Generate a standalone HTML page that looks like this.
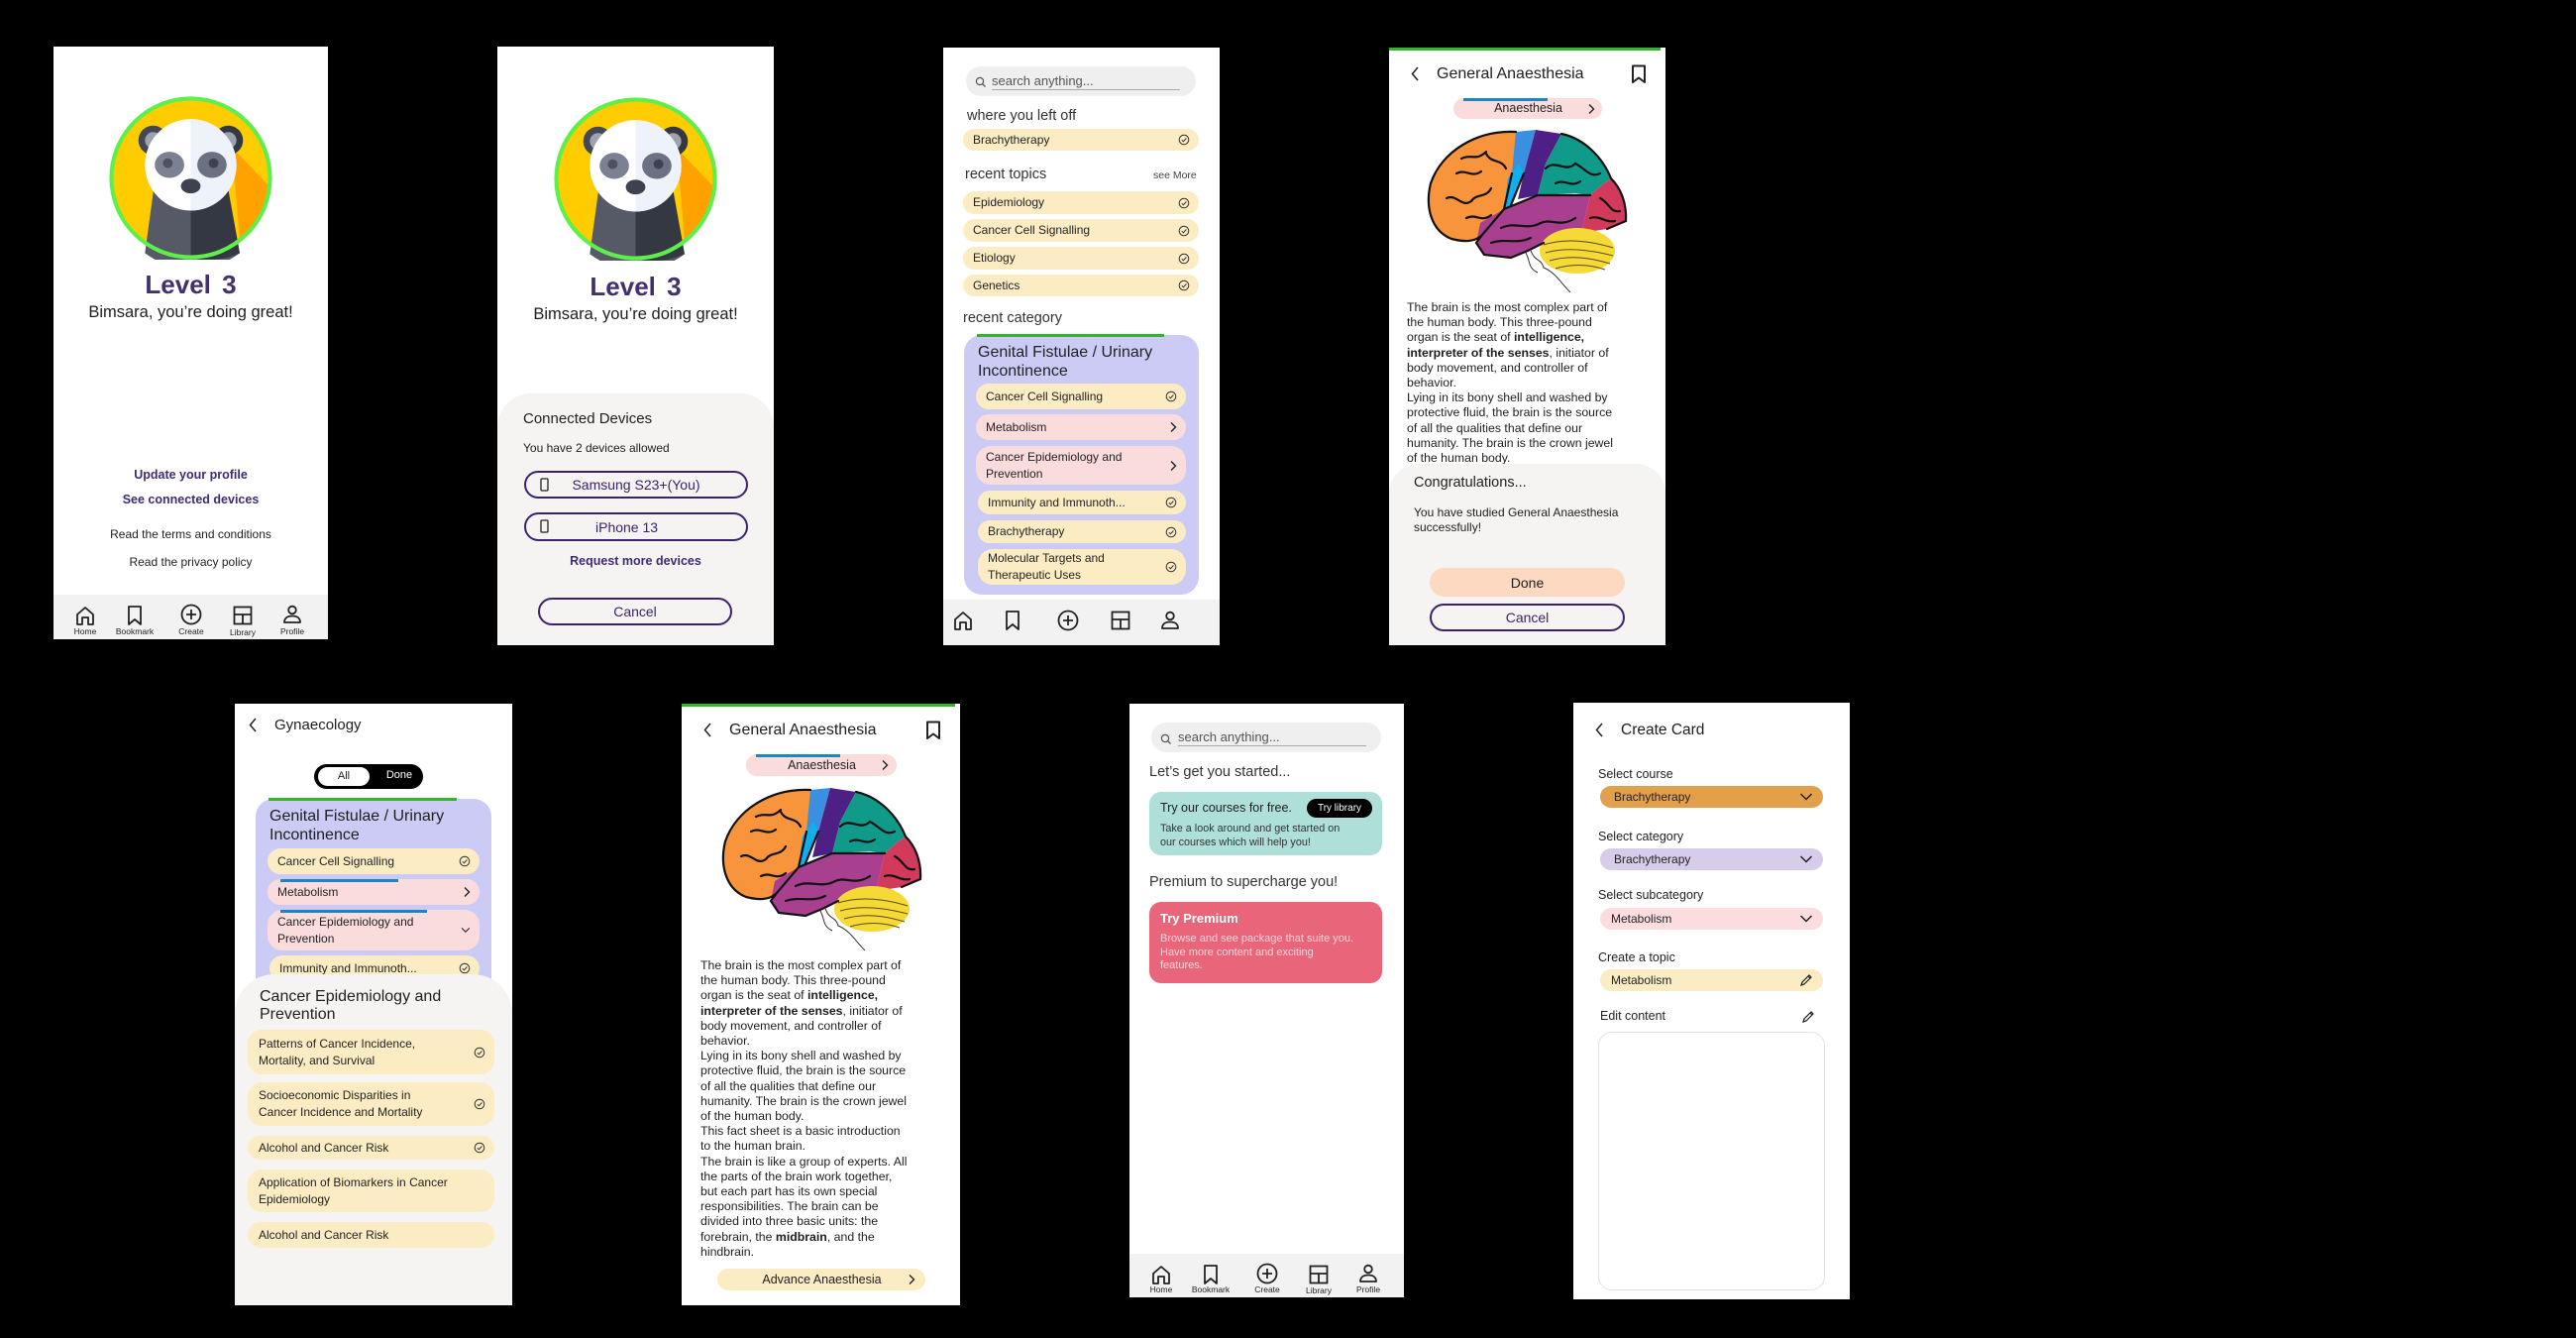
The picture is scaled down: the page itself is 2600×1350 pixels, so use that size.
<!DOCTYPE html>
<html><head><meta charset="utf-8">
<style>
*{margin:0;padding:0;box-sizing:border-box}
body{width:2600px;height:1350px;background:#000;position:relative;overflow:hidden;font-family:"Liberation Sans",sans-serif;color:#1e1e1e}
.s{position:absolute;background:#fff;overflow:hidden}
.a{position:absolute;white-space:nowrap}
.pill{position:absolute;border-radius:13px;display:flex;align-items:center;justify-content:space-between;padding:0 9px 0 10px;font-size:12px;color:#222;line-height:17px}
.y{background:#fcecc4}.p{background:#fbdcdc}
.nav{position:absolute;left:0;width:100%;height:46px;background:#f2f2f2}
.nav svg{position:absolute}
.nav span{position:absolute;font-size:8.5px;color:#222;transform:translateX(-50%)}
.sheet{position:absolute;left:0;width:100%;background:#f5f4f2;border-radius:34px 34px 0 0}
.btn{position:absolute;border:2px solid #3b2270;border-radius:15px;display:flex;align-items:center;justify-content:center;font-size:14px;color:#3b2270}
.purple{color:#3f2a78;font-weight:bold}
.art{position:absolute;font-size:12.3px;line-height:15.2px;color:#1e1e1e;white-space:nowrap}
.search{position:absolute;background:#efefef;border-radius:16px}
.lbl{position:absolute;font-size:12.5px;color:#222;white-space:nowrap}
.dd{position:absolute;left:27px;width:225px;height:22px;border-radius:11px;font-size:12px;display:flex;align-items:center;justify-content:space-between;padding:0 10px 0 14px;color:#222}
</style></head><body>

<svg width="0" height="0" style="position:absolute">
<defs>
<g id="panda">
<circle cx="50" cy="50" r="48.5" fill="#ffcc00"/>
<path d="M72 28 L98 55 A48.5 48.5 0 0 1 80 88 L76 40Z" fill="#ffa200"/>
<path d="M22 96 L28 52 H72 L80 96 A48.5 48.5 0 0 1 22 96Z" fill="#565a66"/>
<path d="M50 52 H72 L80 96 A48.5 48.5 0 0 1 50 99Z" fill="#343842"/>
<circle cx="27" cy="27" r="9" fill="#444856"/><circle cx="27" cy="27" r="5" fill="#9ea1ae"/>
<circle cx="73" cy="27" r="9" fill="#343842"/><circle cx="73" cy="27" r="5" fill="#9ea1ae"/>
<circle cx="50" cy="42" r="28" fill="#fff"/>
<path d="M50 14 A28 28 0 0 1 50 70Z" fill="#eef2fb"/>
<ellipse cx="37" cy="42" rx="9" ry="8" fill="#7c8093"/><circle cx="36" cy="41" r="3" fill="#4d5160"/>
<ellipse cx="63" cy="42" rx="9" ry="8" fill="#6c7083"/><circle cx="64" cy="41" r="3" fill="#3d4150"/>
<ellipse cx="50" cy="55" rx="6" ry="4.5" fill="#3d4150"/>
<circle cx="50" cy="50" r="48.5" fill="none" stroke="#5ef04a" stroke-width="2.5"/>
</g>
<g id="brain">
<path d="M100 8 C60 6 25 28 14 60 C8 85 15 108 35 116 C50 120 60 118 66 112 L88 86 L96 50 L110 8Z" fill="#f7943c"/>
<path d="M100 8 L120 6 L108 50 L95 82 L88 86 L96 50Z" fill="#3a8fe0"/>
<path d="M103 40 L108 50 L95 82 L88 86 L92 55Z" fill="#10aef0"/>
<path d="M120 6 L146 10 L130 40 L122 72 L102 76 L108 50Z" fill="#4e1f84"/>
<path d="M146 10 C170 15 188 35 196 55 L186 62 L175 72 L160 70 L122 72 L130 40Z" fill="#0f9a8a"/>
<path d="M196 55 C206 65 212 80 211 98 L192 106 L166 110 L175 72 L186 62Z" fill="#d13a5a"/>
<path d="M88 86 L122 72 L175 72 L166 110 L150 118 L128 120 L112 128 L95 135 L68 132 L60 120 L64 100Z" fill="#a8408f"/>
<ellipse cx="162" cy="128" rx="38" ry="23" fill="#f4d937"/>
<g fill="none" stroke="#111" stroke-width="2.2" stroke-linecap="round">
<path d="M100 8 C60 6 25 28 14 60 C8 85 15 108 35 116 C50 120 60 118 66 112 L60 120 L68 132 L95 135 L112 128 L128 120"/>
<path d="M146 10 C170 15 188 35 196 55 C206 65 212 80 211 98 L192 106"/>
<path d="M66 112 L88 86 L122 72 L175 72"/>
<path d="M96 50 L88 86 M108 50 L95 82"/>
<path d="M40 50 C50 45 55 55 65 48 M30 75 C40 70 45 85 55 78 C60 70 70 75 75 65 M50 95 C60 90 65 100 75 92 M70 30 C75 40 85 35 90 45 M45 35 C55 30 60 38 70 28"/>
<path d="M130 45 C140 35 150 50 160 40 C170 45 175 55 185 50 M140 60 C150 55 155 65 165 58"/>
<path d="M85 105 C100 98 110 108 125 100 C135 95 145 105 160 95 M75 120 C90 115 100 122 115 115"/>
<path d="M185 75 C195 80 195 90 205 88 M175 95 C185 92 190 100 200 98"/>
</g>
<g fill="none" stroke="#5a4a10" stroke-width="1">
<path d="M128 122 C150 115 175 118 198 125 M130 130 C150 124 175 127 198 133 M134 138 C155 132 175 135 195 141 M140 146 C160 140 178 143 190 147"/>
</g>
<path d="M115 128 C120 140 125 135 128 145 C140 150 145 160 155 170" fill="none" stroke="#333" stroke-width="1"/>
<path d="M110 130 C115 140 112 145 122 150" fill="none" stroke="#333" stroke-width="1"/>
</g>
<g id="chk"><circle cx="6" cy="6" r="4.8" fill="none" stroke="#333" stroke-width="1"/><path d="M3.8 6.2l1.6 1.6 3-3.3" fill="none" stroke="#333" stroke-width="1"/></g>
<g id="chr"><path d="M2 1.5l4.5 4.5-4.5 4.5" fill="none" stroke="#222" stroke-width="1.4"/></g>
<g id="home"><path d="M3 10 L11 3 L19 10 V20 H14 V13 H8 V20 H3 Z" fill="none" stroke="#222" stroke-width="1.8" stroke-linejoin="round"/></g>
<g id="bm"><path d="M5 2 H17 V20 L11 15 L5 20 Z" fill="none" stroke="#222" stroke-width="1.8" stroke-linejoin="round"/></g>
<g id="plus"><circle cx="11" cy="11" r="9.5" fill="none" stroke="#222" stroke-width="1.8"/><path d="M11 6 V16 M6 11 H16" stroke="#222" stroke-width="1.8"/></g>
<g id="lib"><rect x="2.5" y="2.5" width="17" height="17" fill="none" stroke="#222" stroke-width="1.8"/><path d="M2.5 10 H19.5 M11 10 V19.5" stroke="#222" stroke-width="1.8"/></g>
<g id="prof"><circle cx="11" cy="6.5" r="3.8" fill="none" stroke="#222" stroke-width="1.8"/><path d="M3 19 C3 14 7 12.5 11 12.5 C15 12.5 19 14 19 19 Z" fill="none" stroke="#222" stroke-width="1.8" stroke-linejoin="round"/></g>
<g id="mag"><circle cx="5" cy="5" r="3.6" fill="none" stroke="#555" stroke-width="1.2"/><path d="M7.6 7.6 L10.5 10.5" stroke="#555" stroke-width="1.3"/></g>
<g id="back"><path d="M7 1 L1.5 7.5 L7 14" fill="none" stroke="#222" stroke-width="1.5"/></g>
<g id="bmk"><path d="M2 1.5 H14 V18 L8 13.5 L2 18 Z" fill="none" stroke="#222" stroke-width="2" stroke-linejoin="round"/></g>
<g id="dn"><path d="M1.5 2 L7 7.5 L12.5 2" fill="none" stroke="#222" stroke-width="1.5"/></g>
<g id="pen"><path d="M2 12 L3 9 L10 2 L12 4 L5 11 Z M9 3 L11 5" fill="none" stroke="#222" stroke-width="1.2"/></g>
<g id="phone"><rect x="1" y="1" width="7" height="12" rx="1" fill="none" stroke="#222" stroke-width="1.3"/></g>
</defs></svg>

<!-- Screen 1 -->
<div class="s" style="left:54px;top:47px;width:277px;height:598px">
<svg class="a" style="left:56px;top:50px" width="165" height="165" viewBox="0 0 100 100"><use href="#panda"/></svg>
<div class="a" style="left:0;width:100%;text-align:center;top:224px;font-size:26px;font-weight:bold;color:#45306f;line-height:32px;word-spacing:4px">Level 3</div>
<div class="a" style="left:0;width:100%;text-align:center;top:258px;font-size:16.5px;line-height:20px">Bimsara, you’re doing great!</div>
<div class="a purple" style="left:0;width:100%;text-align:center;top:425px;font-size:12.5px">Update your profile</div>
<div class="a purple" style="left:0;width:100%;text-align:center;top:450px;font-size:12.5px">See connected devices</div>
<div class="a" style="left:0;width:100%;text-align:center;top:485px;font-size:12px">Read the terms and conditions</div>
<div class="a" style="left:0;width:100%;text-align:center;top:513px;font-size:12px">Read the privacy policy</div>
<div class="nav" style="top:553px">
<svg style="left:21px;top:10px" width="22" height="22"><use href="#home"/></svg><span style="left:32px;top:32px">Home</span>
<svg style="left:71px;top:10px" width="22" height="22"><use href="#bm"/></svg><span style="left:82px;top:32px">Bookmark</span>
<svg style="left:128px;top:9px" width="22" height="22"><use href="#plus"/></svg><span style="left:139px;top:32px">Create</span>
<svg style="left:180px;top:10px" width="22" height="22"><use href="#lib"/></svg><span style="left:191px;top:33px">Library</span>
<svg style="left:230px;top:9px" width="22" height="22"><use href="#prof"/></svg><span style="left:241px;top:32px">Profile</span>
</div>
</div>

<!-- Screen 2 -->
<div class="s" style="left:502px;top:47px;width:279px;height:604px">
<svg class="a" style="left:57px;top:51px" width="165" height="165" viewBox="0 0 100 100"><use href="#panda"/></svg>
<div class="a" style="left:0;width:100%;text-align:center;top:226px;font-size:26px;font-weight:bold;color:#45306f;line-height:32px;word-spacing:4px">Level 3</div>
<div class="a" style="left:0;width:100%;text-align:center;top:260px;font-size:16.5px;line-height:20px">Bimsara, you’re doing great!</div>
<div class="sheet" style="top:350px;height:260px">
<div class="a" style="left:26px;top:17px;font-size:15px">Connected Devices</div>
<div class="a" style="left:26px;top:48px;font-size:12px">You have 2 devices allowed</div>
<div class="btn" style="left:27px;top:78px;width:226px;height:28px">Samsung S23+(You)</div>
<svg class="a" style="left:43px;top:85px" width="10" height="15"><use href="#phone"/></svg>
<div class="btn" style="left:27px;top:120px;width:226px;height:29px;justify-content:flex-start;padding-left:70px">iPhone 13</div>
<svg class="a" style="left:43px;top:127px" width="10" height="15"><use href="#phone"/></svg>
<div class="a purple" style="left:0;width:100%;text-align:center;top:162px;font-size:12.5px">Request more devices</div>
<div class="btn" style="left:41px;top:206px;width:196px;height:28px">Cancel</div>
</div>
</div>

<!-- Screen 3 -->
<div class="s" style="left:952px;top:48px;width:279px;height:603px">
<div class="search" style="left:23px;top:19px;width:232px;height:30px"></div>
<svg class="a" style="left:32px;top:29px" width="12" height="12"><use href="#mag"/></svg>
<div class="a" style="left:49px;top:26px;font-size:13px;color:#555;border-bottom:1px solid #aaa;width:190px;padding-bottom:1px">search anything...</div>
<div class="a" style="left:24px;top:61px;font-size:14.5px;color:#333">where you left off</div>
<div class="pill y" style="left:20px;top:82px;width:238px;height:22px">Brachytherapy<svg width="12" height="12"><use href="#chk"/></svg></div>
<div class="a" style="left:22px;top:120px;font-size:14.5px;color:#333">recent topics</div>
<div class="a" style="left:212px;top:123px;font-size:10.5px;color:#444">see More</div>
<div class="pill y" style="left:20px;top:145px;width:238px;height:23px">Epidemiology<svg width="12" height="12"><use href="#chk"/></svg></div>
<div class="pill y" style="left:20px;top:173px;width:238px;height:23px">Cancer Cell Signalling<svg width="12" height="12"><use href="#chk"/></svg></div>
<div class="pill y" style="left:20px;top:201px;width:238px;height:23px">Etiology<svg width="12" height="12"><use href="#chk"/></svg></div>
<div class="pill y" style="left:20px;top:229px;width:238px;height:22px">Genetics<svg width="12" height="12"><use href="#chk"/></svg></div>
<div class="a" style="left:20px;top:265px;font-size:14.5px;color:#333">recent category</div>
<div class="a" style="left:21px;top:290px;width:237px;height:262px;background:#cccbf5;border-radius:18px"></div>
<div class="a" style="left:34px;top:289px;width:189px;height:3px;background:#32b52a"></div>
<div class="a" style="left:35px;top:298px;font-size:16px;line-height:19px;color:#222">Genital Fistulae / Urinary<br>Incontinence</div>
<div class="pill y" style="left:33px;top:339px;width:212px;height:26px">Cancer Cell Signalling<svg width="12" height="12"><use href="#chk"/></svg></div>
<div class="pill p" style="left:33px;top:370px;width:212px;height:26px">Metabolism<svg width="8" height="12"><use href="#chr"/></svg></div>
<div class="pill p" style="left:33px;top:402px;width:212px;height:39px;border-radius:15px">Cancer Epidemiology and<br>Prevention<svg width="8" height="12"><use href="#chr"/></svg></div>
<div class="pill y" style="left:35px;top:447px;width:210px;height:24px">Immunity and Immunoth...<svg width="12" height="12"><use href="#chk"/></svg></div>
<div class="pill y" style="left:35px;top:477px;width:210px;height:23px">Brachytherapy<svg width="12" height="12"><use href="#chk"/></svg></div>
<div class="pill y" style="left:35px;top:506px;width:210px;height:36px;border-radius:15px">Molecular Targets and<br>Therapeutic Uses<svg width="12" height="12"><use href="#chk"/></svg></div>
<div class="nav" style="top:557px">
<svg style="left:9px;top:10px" width="22" height="22" viewBox="0 0 22 22"><use href="#home"/></svg>
<svg style="left:59px;top:10px" width="22" height="22"><use href="#bm"/></svg>
<svg style="left:115px;top:10px" width="22" height="22"><use href="#plus"/></svg>
<svg style="left:168px;top:10px" width="22" height="22"><use href="#lib"/></svg>
<svg style="left:218px;top:10px" width="22" height="22"><use href="#prof"/></svg>
</div>
</div>

<!-- Screen 4 -->
<div class="s" style="left:1402px;top:48px;width:279px;height:603px">
<div class="a" style="left:0;top:0;width:274px;height:3px;background:#32b52a"></div>
<svg class="a" style="left:22px;top:19px" width="9" height="16"><use href="#back"/></svg>
<div class="a" style="left:48px;top:18px;font-size:16px">General Anaesthesia</div>
<svg class="a" style="left:244px;top:17px" width="16" height="20"><use href="#bmk"/></svg>
<div class="pill p" style="left:65px;top:51px;width:150px;height:21px;justify-content:center;font-size:12.5px">Anaesthesia</div>
<svg class="a" style="left:200px;top:56px" width="8" height="12"><use href="#chr"/></svg>
<div class="a" style="left:75px;top:51px;width:85px;height:3px;background:#1a86c4"></div>
<svg class="a" style="left:28px;top:77px" width="220" height="180" viewBox="0 0 220 180"><use href="#brain"/></svg>
<div class="art" style="left:18px;top:255px">The brain is the most complex part of<br>the human body. This three-pound<br>organ is the seat of <b>intelligence,</b><br><b>interpreter of the senses</b>, initiator of<br>body movement, and controller of<br>behavior.<br>Lying in its bony shell and washed by<br>protective fluid, the brain is the source<br>of all the qualities that define our<br>humanity. The brain is the crown jewel<br>of the human body.<br>This fact sheet is a basic introduction</div>
<div class="sheet" style="top:420px;height:190px;border-radius:30px 30px 0 0">
<div class="a" style="left:25px;top:11px;font-size:14.5px">Congratulations...</div>
<div class="a" style="left:25px;top:42px;font-size:12px;line-height:15px">You have studied General Anaesthesia<br>successfully!</div>
<div class="a" style="left:41px;top:105px;width:197px;height:29px;border-radius:15px;background:#fcd9c0;font-size:14px;display:flex;align-items:center;justify-content:center">Done</div>
<div class="btn" style="left:41px;top:141px;width:197px;height:28px">Cancel</div>
</div>
</div>

<!-- Screen 5 -->
<div class="s" style="left:237px;top:710px;width:280px;height:607px">
<svg class="a" style="left:14px;top:14px" width="9" height="16"><use href="#back"/></svg>
<div class="a" style="left:40px;top:13px;font-size:15px">Gynaecology</div>
<div class="a" style="left:80px;top:61px;width:110px;height:25px;background:#000;border-radius:13px"></div>
<div class="a" style="left:84px;top:64px;width:52px;height:19px;background:#fff;border-radius:10px;font-size:11px;text-align:center;line-height:19px">All</div>
<div class="a" style="left:150px;top:66px;width:32px;font-size:11px;color:#fff;text-align:center">Done</div>
<div class="a" style="left:21px;top:96px;width:238px;height:240px;background:#cccbf5;border-radius:18px"></div>
<div class="a" style="left:34px;top:95px;width:190px;height:3px;background:#32b52a"></div>
<div class="a" style="left:35px;top:104px;font-size:16px;line-height:19px">Genital Fistulae / Urinary<br>Incontinence</div>
<div class="pill y" style="left:33px;top:146px;width:214px;height:26px">Cancer Cell Signalling<svg width="12" height="12"><use href="#chk"/></svg></div>
<div class="pill p" style="left:33px;top:177px;width:214px;height:26px">Metabolism<svg width="8" height="12"><use href="#chr"/></svg></div>
<div class="a" style="left:46px;top:177px;width:119px;height:3px;background:#1a86c4"></div>
<div class="pill p" style="left:33px;top:208px;width:214px;height:41px;border-radius:15px">Cancer Epidemiology and<br>Prevention<svg width="10" height="8"><use href="#dn" transform="scale(0.7)"/></svg></div>
<div class="a" style="left:46px;top:208px;width:148px;height:3px;background:#1a86c4"></div>
<div class="pill y" style="left:35px;top:254px;width:212px;height:26px">Immunity and Immunoth...<svg width="12" height="12"><use href="#chk"/></svg></div>
<div class="sheet" style="top:273px;height:340px;border-radius:40px 40px 0 0">
<div class="a" style="left:25px;top:14px;font-size:16px;line-height:18px">Cancer Epidemiology and<br>Prevention</div>
<div class="pill y" style="left:13px;top:56px;width:249px;height:45px;border-radius:14px;padding-left:11px">Patterns of Cancer Incidence,<br>Mortality, and Survival<svg width="12" height="12"><use href="#chk"/></svg></div>
<div class="pill y" style="left:13px;top:109px;width:249px;height:44px;border-radius:14px;padding-left:11px">Socioeconomic Disparities in<br>Cancer Incidence and Mortality<svg width="12" height="12"><use href="#chk"/></svg></div>
<div class="pill y" style="left:13px;top:163px;width:249px;height:24px;padding-left:11px">Alcohol and Cancer Risk<svg width="12" height="12"><use href="#chk"/></svg></div>
<div class="pill y" style="left:13px;top:197px;width:249px;height:43px;border-radius:14px;padding-left:11px">Application of Biomarkers in Cancer<br>Epidemiology</div>
<div class="pill y" style="left:13px;top:250px;width:249px;height:26px;padding-left:11px">Alcohol and Cancer Risk</div>
</div>
</div>

<!-- Screen 6 -->
<div class="s" style="left:688px;top:710px;width:281px;height:607px">
<div class="a" style="left:0;top:0;width:276px;height:3px;background:#32b52a"></div>
<svg class="a" style="left:22px;top:19px" width="9" height="16"><use href="#back"/></svg>
<div class="a" style="left:48px;top:18px;font-size:16px">General Anaesthesia</div>
<svg class="a" style="left:246px;top:17px" width="16" height="20"><use href="#bmk"/></svg>
<div class="pill p" style="left:65px;top:51px;width:152px;height:22px;justify-content:center;font-size:12.5px">Anaesthesia</div>
<svg class="a" style="left:201px;top:56px" width="8" height="12"><use href="#chr"/></svg>
<div class="a" style="left:75px;top:51px;width:85px;height:3px;background:#1a86c4"></div>
<svg class="a" style="left:30px;top:79px" width="220" height="180" viewBox="0 0 220 180"><use href="#brain"/></svg>
<div class="art" style="left:19px;top:257px">The brain is the most complex part of<br>the human body. This three-pound<br>organ is the seat of <b>intelligence,</b><br><b>interpreter of the senses</b>, initiator of<br>body movement, and controller of<br>behavior.<br>Lying in its bony shell and washed by<br>protective fluid, the brain is the source<br>of all the qualities that define our<br>humanity. The brain is the crown jewel<br>of the human body.<br>This fact sheet is a basic introduction<br>to the human brain.<br>The brain is like a group of experts. All<br>the parts of the brain work together,<br>but each part has its own special<br>responsibilities. The brain can be<br>divided into three basic units: the<br>forebrain, the <b>midbrain</b>, and the<br>hindbrain.</div>
<div class="pill y" style="left:36px;top:570px;width:210px;height:22px;justify-content:center;font-size:12.5px">Advance Anaesthesia</div>
<svg class="a" style="left:228px;top:575px" width="8" height="12"><use href="#chr"/></svg>
</div>

<!-- Screen 7 -->
<div class="s" style="left:1140px;top:710px;width:277px;height:599px">
<div class="search" style="left:22px;top:19px;width:232px;height:30px"></div>
<svg class="a" style="left:31px;top:30px" width="12" height="12"><use href="#mag"/></svg>
<div class="a" style="left:49px;top:26px;font-size:13px;color:#555;border-bottom:1px solid #aaa;width:190px;padding-bottom:1px">search anything...</div>
<div class="a" style="left:20px;top:61px;font-size:14.5px;color:#333">Let’s get you started...</div>
<div class="a" style="left:20px;top:89px;width:235px;height:64px;background:#aedfd8;border-radius:12px"></div>
<div class="a" style="left:31px;top:98px;font-size:12.5px">Try our courses for free.</div>
<div class="a" style="left:179px;top:96px;width:66px;height:19px;background:#000;border-radius:10px;color:#fff;font-size:10px;text-align:center;line-height:19px">Try library</div>
<div class="a" style="left:31px;top:120px;font-size:10.8px;line-height:13.5px;color:#333">Take a look around and get started on<br>our courses which will help you!</div>
<div class="a" style="left:20px;top:172px;font-size:14.5px;color:#333">Premium to supercharge you!</div>
<div class="a" style="left:20px;top:200px;width:235px;height:82px;background:#e9657a;border-radius:12px"></div>
<div class="a" style="left:31px;top:209px;font-size:13px;font-weight:bold;color:#fff">Try Premium</div>
<div class="a" style="left:31px;top:231px;font-size:11px;line-height:13.5px;color:#fcd4da">Browse and see package that suite you.<br>Have more content and exciting<br>features.</div>
<div class="nav" style="top:555px;height:44px">
<svg style="left:21px;top:10px" width="22" height="22"><use href="#home"/></svg><span style="left:32px;top:31px">Home</span>
<svg style="left:71px;top:10px" width="22" height="22"><use href="#bm"/></svg><span style="left:82px;top:31px">Bookmark</span>
<svg style="left:128px;top:9px" width="22" height="22"><use href="#plus"/></svg><span style="left:139px;top:31px">Create</span>
<svg style="left:180px;top:10px" width="22" height="22"><use href="#lib"/></svg><span style="left:191px;top:32px">Library</span>
<svg style="left:230px;top:9px" width="22" height="22"><use href="#prof"/></svg><span style="left:241px;top:31px">Profile</span>
</div>
</div>

<!-- Screen 8 -->
<div class="s" style="left:1588px;top:709px;width:279px;height:602px">
<svg class="a" style="left:22px;top:20px" width="9" height="16"><use href="#back"/></svg>
<div class="a" style="left:48px;top:19px;font-size:15.5px">Create Card</div>
<div class="lbl" style="left:25px;top:65px">Select course</div>
<div class="dd" style="top:84px;background:#e3a04a">Brachytherapy<svg width="14" height="10"><use href="#dn"/></svg></div>
<div class="lbl" style="left:25px;top:128px">Select category</div>
<div class="dd" style="top:147px;background:#d7cdea">Brachytherapy<svg width="14" height="10"><use href="#dn"/></svg></div>
<div class="lbl" style="left:25px;top:187px">Select subcategory</div>
<div class="dd" style="top:207px;background:#fbdde0;padding-left:11px">Metabolism<svg width="14" height="10"><use href="#dn"/></svg></div>
<div class="lbl" style="left:25px;top:250px">Create a topic</div>
<div class="dd" style="top:269px;background:#fcecc4;padding-left:11px">Metabolism<svg width="14" height="14"><use href="#pen"/></svg></div>
<div class="lbl" style="left:27px;top:309px">Edit content</div>
<svg class="a" style="left:230px;top:310px" width="14" height="14"><use href="#pen"/></svg>
<div class="a" style="left:25px;top:332px;width:229px;height:261px;border:1px solid #e3e3e3;border-radius:14px"></div>
</div>

</body></html>
